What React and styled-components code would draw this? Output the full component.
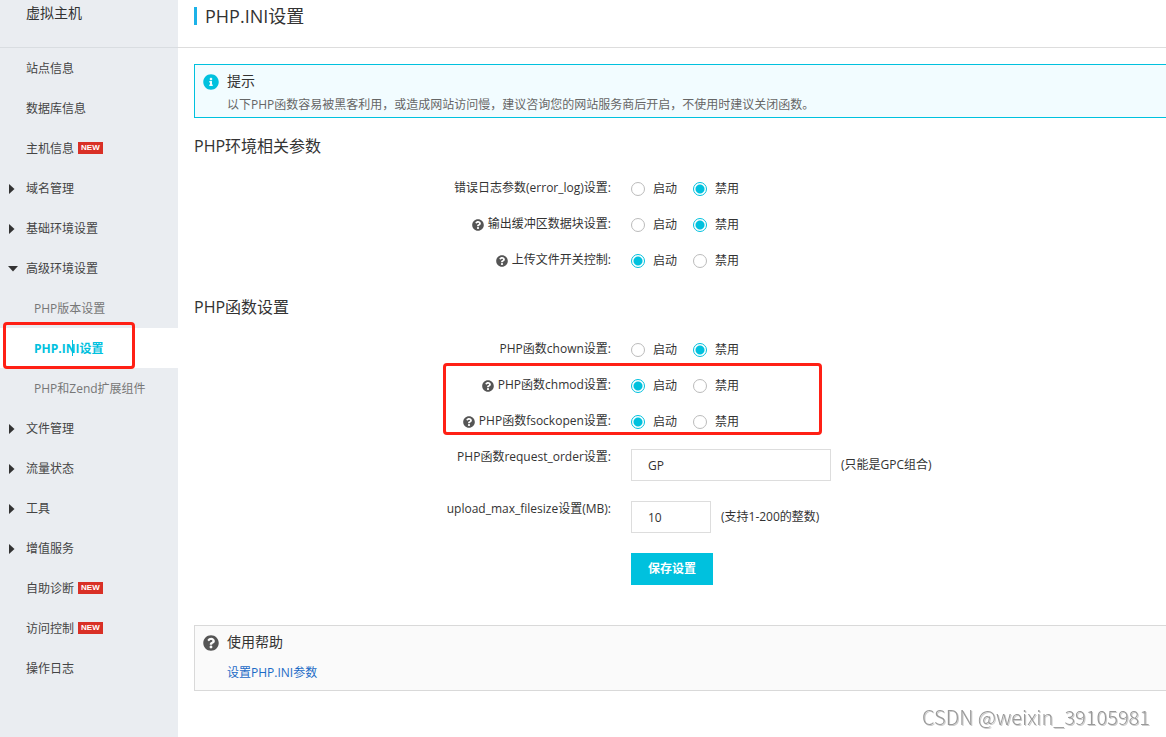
//libraries
import React from "react";
import { useState } from "react";
import styled, { createGlobalStyle, css } from "styled-components";
import { FaInfoCircle, FaQuestionCircle } from "react-icons/fa";

const GlobalStyle = createGlobalStyle`
  * {
    box-sizing: border-box;
  }

  body {
    margin: 0;
    background: #fff;
    color: #333;
    font-family: "Open Sans", "Noto Sans CJK SC", sans-serif;
    font-size: 12px;
    line-height: 16px;
  }

  h1, h2, h3, p, ul {
    margin: 0;
    padding: 0;
    font-weight: 400;
  }
`;

const Page = styled.div`
  display: flex;
  min-height: 100vh;
  overflow-x: hidden;
`;

const Sidebar = styled.aside`
  flex: 0 0 178px;
  background: #eaedf1;
`;

const SidebarTitle = styled.h2`
  height: 48px;
  padding: 3px 26px;
  border-bottom: 1px solid #d9dde1;
  font-size: 14px;
  line-height: 20px;
`;

const NavList = styled.ul`
  list-style: none;
`;

const NavItem = styled.li`
  position: relative;
`;

const NavLink = styled.a`
  display: flex;
  align-items: center;
  height: 40px;
  padding-top: 2px;
  padding-left: ${(props) => (props.$child ? "34px" : "8px")};
  color: ${(props) => (props.$child ? "#777" : "#444")};
  text-decoration: none;

  ${(props) =>
    props.$active &&
    css`
      background: #fff;
      color: #00c1de;
      font-weight: 700;
    `}
`;

const ArrowSlot = styled.span`
  display: flex;
  width: 18px;
`;

const Arrow = styled.svg`
  display: block;
  fill: #333;
`;

const NewBadge = styled.span`
  margin: 0 0 2px 4px;
  padding: 0 3px;
  background: #d93026;
  color: #fff;
  font-family: "Liberation Sans", sans-serif;
  font-size: 8px;
  font-weight: 700;
  line-height: 12px;
`;

const Caret = styled.span`
  position: absolute;
  top: 12px;
  left: 72px;
  width: 1px;
  height: 16px;
  background: #00c1de;
`;

const Highlight = styled.span`
  position: absolute;
  border: 3px solid #ff2015;
  border-radius: 4px;
  pointer-events: none;
`;

const NavHighlight = styled(Highlight)`
  top: -6px;
  left: 3px;
  width: 132px;
  height: 47px;
`;

const RowsHighlight = styled(Highlight)`
  top: -14px;
  left: calc(43% - 169px);
  width: 379px;
  height: 72px;
`;

const Main = styled.main`
  flex: 1;
  min-width: 0;
`;

const Header = styled.header`
  height: 48px;
  padding: 3px 16px;
  border-bottom: 1px solid #ddd;
`;

const Title = styled.h1`
  display: flex;
  align-items: center;
  gap: 8px;
  font-size: 18px;
  line-height: 26px;

  &::before {
    content: "";
    width: 3px;
    height: 18px;
    background: #1cb2e8;
  }
`;

const Content = styled.div`
  padding: 16px 0 46px 16px;
`;

const Panel = styled.section`
  display: flex;
  gap: 8px;
  padding: 8px 8px ${(props) => (props.$info ? "4px" : "9px")};
  border: 1px solid ${(props) => (props.$info ? "#00c1de" : "#d9d9d9")};
  border-right: 0;
  background: ${(props) => (props.$info ? "#f2fcff" : "#fafafa")};
`;

const PanelIcon = styled.span`
  display: flex;
  padding-top: 1px;
  font-size: 16px;
  color: ${(props) => (props.$info ? "#00c1de" : "#555")};
`;

const PanelBody = styled.div`
  display: flex;
  flex-direction: column;
  gap: ${(props) => (props.$info ? "8px" : "15px")};
  color: #666;

  h3 {
    color: #333;
    font-size: 14px;
    line-height: 16px;
  }

  a {
    color: #1c6bc6;
    text-decoration: none;
  }
`;

const SectionTitle = styled.h2`
  margin: ${(props) => (props.$first ? "16px" : "25px")} 0 22px;
  font-size: 16px;
  line-height: 24px;
`;

const Rows = styled.div`
  position: relative;
  display: flex;
  flex-direction: column;
  gap: ${(props) => (props.$fields ? "20px" : "18px")};
  margin-bottom: 18px;
`;

const Row = styled.div`
  display: flex;
  align-items: flex-start;
  gap: 20px;
`;

const Label = styled.div`
  display: flex;
  flex: 0 0 42.9%;
  align-items: center;
  justify-content: flex-end;
  gap: 4px;

  svg {
    margin-top: 2px;
    font-size: 12px;
    color: #555;
  }
`;

const RadioGroup = styled.div`
  display: flex;
  gap: 16px;
`;

const Option = styled.label`
  display: flex;
  align-items: center;
  gap: 8px;
  line-height: 18px;
`;

const Radio = styled.input`
  appearance: none;
  width: 14px;
  height: 14px;
  margin: 0;
  border: 1px solid #bbb;
  border-radius: 50%;
  background: #fff;

  &:checked {
    border-color: #00c1de;
    background: radial-gradient(circle, #00c1de 4px, #fff 5px);
  }
`;

const Field = styled.div`
  display: flex;
  align-items: center;
  gap: 10px;
`;

const TextInput = styled.input`
  width: ${(props) => (props.$short ? "80px" : "200px")};
  height: 32px;
  padding: 0 16px;
  border: 1px solid #ddd;
  color: #333;
  font: inherit;
`;

const SaveButton = styled.button`
  height: 32px;
  padding: 0 17px;
  border: 0;
  background: #00c1de;
  color: #fff;
  font: inherit;
  font-weight: 700;
`;

const HelpArea = styled.div`
  margin-top: 40px;
`;

const Watermark = styled.div`
  position: fixed;
  right: 16px;
  bottom: 9px;
  color: #999;
  font-family: "Noto Sans CJK SC", sans-serif;
  font-size: 20px;
  font-weight: 300;
  line-height: 22px;
  text-shadow: 1px 1px 0 #ccc;
`;

const menu = [
  { text: "站点信息" },
  { text: "数据库信息" },
  { text: "主机信息", isNew: true },
  { text: "域名管理", arrow: "right" },
  { text: "基础环境设置", arrow: "right" },
  { text: "高级环境设置", arrow: "down" },
  { text: "PHP版本设置", child: true },
  { text: "PHP.INI设置", child: true, active: true },
  { text: "PHP和Zend扩展组件", child: true },
  { text: "文件管理", arrow: "right" },
  { text: "流量状态", arrow: "right" },
  { text: "工具", arrow: "right" },
  { text: "增值服务", arrow: "right" },
  { text: "自助诊断", isNew: true },
  { text: "访问控制", isNew: true },
  { text: "操作日志" },
];

function MenuArrow({ direction }) {
  if (direction === "right") {
    return (
      <Arrow width="7" height="10" viewBox="0 0 7 10">
        <path d="M1 0 L6.5 5 L1 10 Z" />
      </Arrow>
    );
  }
  return (
    <Arrow width="10" height="6" viewBox="0 0 10 6">
      <path d="M0 0 H10 L5 5.5 Z" />
    </Arrow>
  );
}

function MenuItem({ item }) {
  return (
    <NavItem>
      <NavLink href="#" $child={item.child} $active={item.active}>
        {!item.child && (
          <ArrowSlot>{item.arrow && <MenuArrow direction={item.arrow} />}</ArrowSlot>
        )}
        {item.text}
        {item.isNew && <NewBadge>NEW</NewBadge>}
      </NavLink>
      {item.active && (
        <>
          <Caret />
          <NavHighlight />
        </>
      )}
    </NavItem>
  );
}

function SwitchRow({ name, label, help, on }) {
  const [enabled, setEnabled] = useState(Boolean(on));
  return (
    <Row role="radiogroup" aria-labelledby={name + "-label"}>
      <Label>
        {help && <FaQuestionCircle />}
        <span id={name + "-label"}>{label}</span>
      </Label>
      <RadioGroup>
        <Option>
          <Radio type="radio" name={name} checked={enabled} onChange={() => setEnabled(true)} />
          启动
        </Option>
        <Option>
          <Radio type="radio" name={name} checked={!enabled} onChange={() => setEnabled(false)} />
          禁用
        </Option>
      </RadioGroup>
    </Row>
  );
}

function TextRow({ id, label, value, hint, short }) {
  return (
    <Row>
      <Label as="label" htmlFor={id}>
        {label}
      </Label>
      <Field>
        <TextInput id={id} type="text" defaultValue={value} $short={short} />
        <span>{hint}</span>
      </Field>
    </Row>
  );
}

function App() {
  return (
    <>
      <GlobalStyle />
      <Page>
        <Sidebar>
          <SidebarTitle>虚拟主机</SidebarTitle>
          <nav>
            <NavList>
              {menu.map((item) => (
                <MenuItem key={item.text} item={item} />
              ))}
            </NavList>
          </nav>
        </Sidebar>
        <Main>
          <Header>
            <Title>PHP.INI设置</Title>
          </Header>
          <Content>
            <Panel $info>
              <PanelIcon $info>
                <FaInfoCircle />
              </PanelIcon>
              <PanelBody $info>
                <h3>提示</h3>
                <p>以下PHP函数容易被黑客利用，或造成网站访问慢，建议咨询您的网站服务商后开启，不使用时建议关闭函数。</p>
              </PanelBody>
            </Panel>

            <SectionTitle $first>PHP环境相关参数</SectionTitle>
            <Rows>
              <SwitchRow name="error_log" label="错误日志参数(error_log)设置:" />
              <SwitchRow name="output_buffering" label="输出缓冲区数据块设置:" help />
              <SwitchRow name="file_uploads" label="上传文件开关控制:" help on />
            </Rows>

            <SectionTitle>PHP函数设置</SectionTitle>
            <Rows>
              <SwitchRow name="chown" label="PHP函数chown设置:" />
            </Rows>
            <Rows>
              <SwitchRow name="chmod" label="PHP函数chmod设置:" help on />
              <SwitchRow name="fsockopen" label="PHP函数fsockopen设置:" help on />
              <RowsHighlight />
            </Rows>
            <Rows $fields>
              <TextRow
                id="request_order"
                label="PHP函数request_order设置:"
                value="GP"
                hint="(只能是GPC组合)"
              />
              <TextRow
                id="upload_max_filesize"
                label="upload_max_filesize设置(MB):"
                value="10"
                hint="(支持1-200的整数)"
                short
              />
              <Row>
                <Label />
                <SaveButton type="button">保存设置</SaveButton>
              </Row>
            </Rows>

            <HelpArea>
              <Panel>
                <PanelIcon>
                  <FaQuestionCircle />
                </PanelIcon>
                <PanelBody>
                  <h3>使用帮助</h3>
                  <a href="#">设置PHP.INI参数</a>
                </PanelBody>
              </Panel>
            </HelpArea>
          </Content>
        </Main>
      </Page>
      <Watermark>CSDN @weixin_39105981</Watermark>
    </>
  );
}

export default App;
